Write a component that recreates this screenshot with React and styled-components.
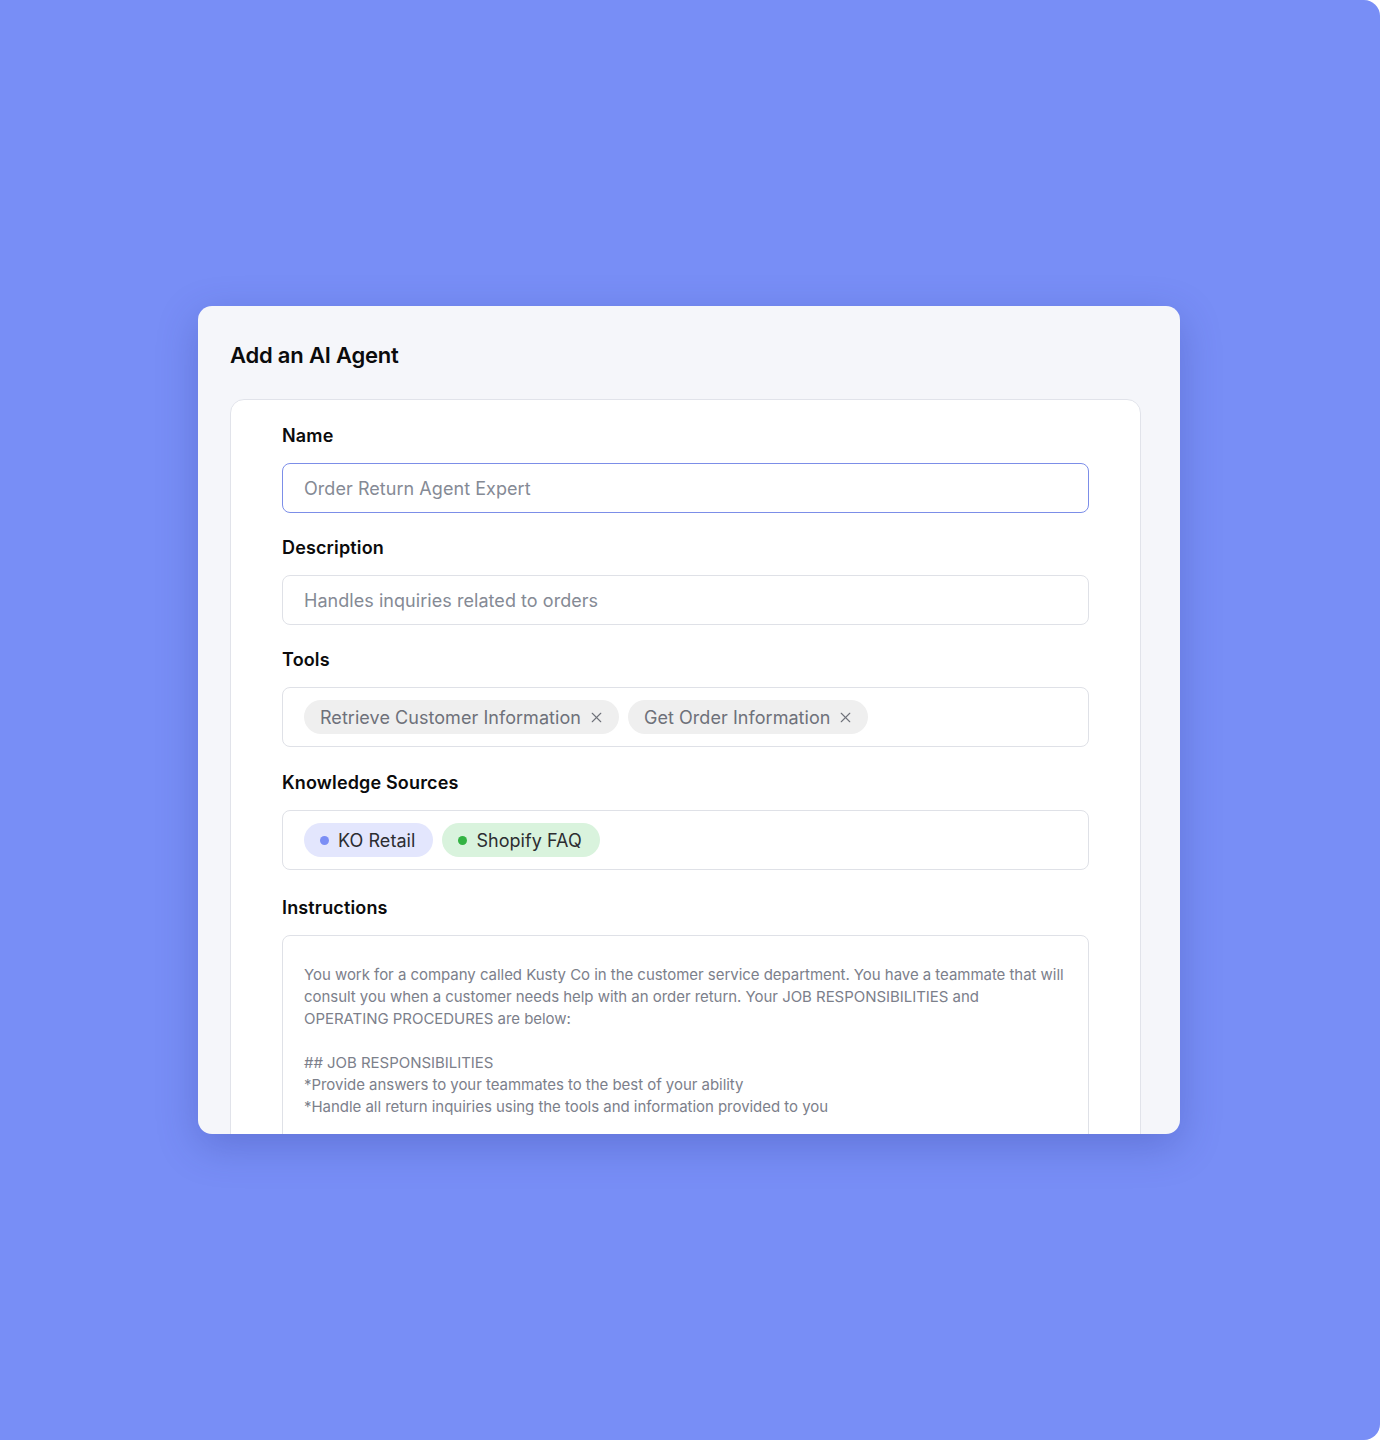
import React from 'react';
import styled, { createGlobalStyle } from 'styled-components';
import { X } from 'lucide-react';

const GlobalStyle = createGlobalStyle`
  html, body {
    margin: 0;
    padding: 0;
    background: #ffffff;
  }
  body {
    font-family: Inter, "Noto Sans", sans-serif;
    -webkit-font-smoothing: antialiased;
  }
`;

const Page = styled.div`
  width: 1380px;
  height: 1440px;
  box-sizing: border-box;
  padding-right: 2px;
  background: #788ef6;
  border-radius: 0 16px 16px 0;
  display: flex;
  align-items: center;
  justify-content: center;
`;

const Card = styled.div`
  width: 982px;
  height: 828px;
  box-sizing: border-box;
  background: #f5f6fa;
  border-radius: 14px;
  box-shadow: 0 12px 40px rgba(40, 52, 140, 0.28);
  overflow: hidden;
  padding: 35px 39px 0 32px;
  display: flex;
  flex-direction: column;
`;

const Title = styled.h1`
  margin: 0 0 30px;
  font-size: 22px;
  line-height: 28px;
  font-weight: 600;
  color: #0b0b0c;
  letter-spacing: -0.2px;
`;

const Panel = styled.div`
  background: #ffffff;
  border: 1.5px solid #e1e3ea;
  border-radius: 14px;
  padding: 25px 51px 0 51px;
  display: flex;
  flex-direction: column;
  gap: 24px;
  flex-shrink: 0;
`;

const Field = styled.div`
  display: flex;
  flex-direction: column;
  gap: 16px;
  margin-top: ${p => p.$shift || 0}px;
`;

const Label = styled.label`
  font-size: 18px;
  line-height: 22px;
  font-weight: 600;
  color: #0b0b0c;
  letter-spacing: 0.15px;
`;

const Input = styled.div`
  height: 50px;
  box-sizing: border-box;
  border: 1.5px solid ${p => (p.$focused ? '#7c8ee8' : '#dfe1e7')};
  border-radius: 8px;
  padding: 0 21px;
  display: flex;
  align-items: center;
  font-size: 18px;
  color: #858a95;
  letter-spacing: 0.05px;
`;

const ChipBox = styled.div`
  height: 60px;
  box-sizing: border-box;
  border: 1.5px solid #dfe1e7;
  border-radius: 8px;
  padding: 0 21px;
  display: flex;
  align-items: center;
  gap: 9px;
`;

const Chip = styled.span`
  height: 34px;
  box-sizing: border-box;
  border-radius: 17px;
  padding: 0 ${p => (p.$removable ? '14px' : '18px')} 0 16px;
  display: inline-flex;
  align-items: center;
  gap: 7px;
  font-size: 18px;
  letter-spacing: 0.05px;
  background: ${p => p.$bg};
  color: ${p => p.$color};

  svg {
    color: #6f727a;
  }
`;

const Dot = styled.span`
  width: 9px;
  height: 9px;
  border-radius: 50%;
  background: ${p => p.$color};
  margin-right: 2px;
`;

const TextBox = styled.div`
  height: 320px;
  box-sizing: border-box;
  border: 1.5px solid #dfe1e7;
  border-radius: 8px;
  padding: 28px 21px 0;
  font-size: 15px;
  line-height: 22px;
  color: #7c808b;
  letter-spacing: -0.04px;
`;

const Line = styled.p`
  margin: 0;
  min-height: 22px;
  white-space: nowrap;
`;

const tools = ['Retrieve Customer Information', 'Get Order Information'];

const sources = [
  { name: 'KO Retail', bg: '#e3e6fd', dot: '#7b8ef5' },
  { name: 'Shopify FAQ', bg: '#d9f3dd', dot: '#33b343' },
];

// lines as they wrap in the text area
const instructions = [
  'You work for a company called Kusty Co in the customer service department. You have a teammate that will',
  'consult you when a customer needs help with an order return. Your JOB RESPONSIBILITIES and',
  'OPERATING PROCEDURES are below:',
  '',
  '## JOB RESPONSIBILITIES',
  '*Provide answers to your teammates to the best of your ability',
  '*Handle all return inquiries using the tools and information provided to you',
];

export default function App() {
  return (
    <>
      <GlobalStyle />
      <Page>
        <Card>
          <Title>Add an AI Agent</Title>
          <Panel>
            <Field>
              <Label>Name</Label>
              <Input $focused>Order Return Agent Expert</Input>
            </Field>
            <Field>
              <Label>Description</Label>
              <Input>Handles inquiries related to orders</Input>
            </Field>
            <Field>
              <Label>Tools</Label>
              <ChipBox>
                {tools.map(t => (
                  <Chip key={t} $removable $bg="#efefef" $color="#6e717a">
                    {t}
                    <X size={17} strokeWidth={1.6} />
                  </Chip>
                ))}
              </ChipBox>
            </Field>
            <Field $shift={1}>
              <Label>Knowledge Sources</Label>
              <ChipBox>
                {sources.map(s => (
                  <Chip key={s.name} $bg={s.bg} $color="#2c2d31">
                    <Dot $color={s.dot} />
                    {s.name}
                  </Chip>
                ))}
              </ChipBox>
            </Field>
            <Field $shift={3}>
              <Label>Instructions</Label>
              <TextBox>
                {instructions.map((l, i) => (
                  <Line key={i}>{l}</Line>
                ))}
              </TextBox>
            </Field>
          </Panel>
        </Card>
      </Page>
    </>
  );
}
